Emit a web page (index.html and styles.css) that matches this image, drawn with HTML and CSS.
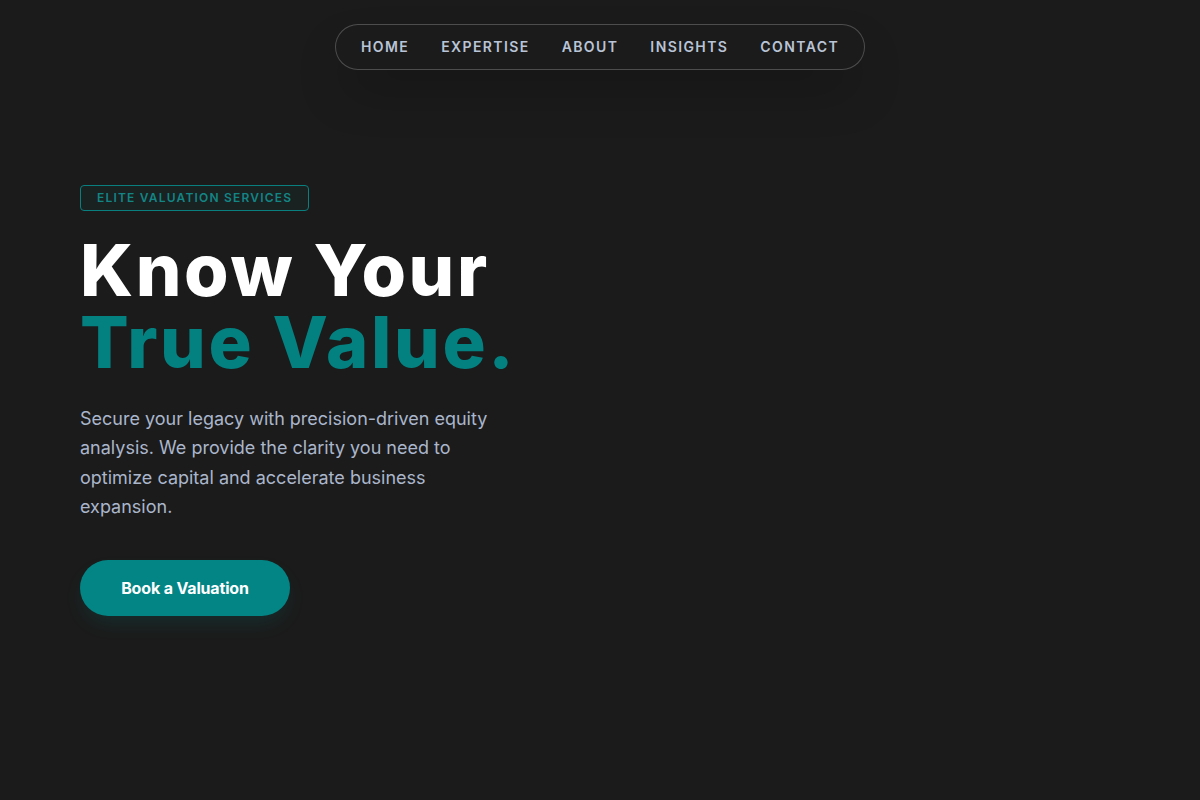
FILE: index.html
```html
<!DOCTYPE html>
<html lang="en">
<head>
<meta charset="utf-8">
<title>Know Your True Value</title>
<link rel="stylesheet" href="styles.css">
</head>
<body>
<header class="top">
  <nav class="nav">
    <a href="#">HOME</a>
    <a href="#">EXPERTISE</a>
    <a href="#">ABOUT</a>
    <a href="#">INSIGHTS</a>
    <a href="#">CONTACT</a>
  </nav>
</header>
<main class="hero">
  <span class="badge">ELITE VALUATION SERVICES</span>
  <h1 class="title"><span class="line-white">Know Your</span><span class="line-teal">True Value.</span></h1>
  <p class="lead">Secure your legacy with precision-driven equity analysis. We provide the clarity you need to optimize capital and accelerate business expansion.</p>
  <a class="cta" href="#">Book a Valuation</a>
</main>
</body>
</html>
```
FILE: styles.css
```css
* { box-sizing: border-box; }
html, body { margin: 0; padding: 0; }
body {
  background: #1b1b1b;
  font-family: Inter, "Noto Sans", sans-serif;
  color: #fff;
  width: 1200px;
  height: 800px;
  overflow: hidden;
}
.top {
  display: flex;
  justify-content: center;
  padding-top: 24px;
}
.nav {
  display: flex;
  gap: 32px;
  height: 46px;
  align-items: center;
  padding: 0 25px 1px;
  border: 1px solid rgba(255,255,255,0.22);
  border-radius: 999px;
  background: #1b1b1b;
  box-shadow: 0 25px 50px -12px rgba(0,0,0,0.35);
}
.nav a {
  color: #b9c4d6;
  text-decoration: none;
  font-size: 14px;
  font-weight: 600;
  letter-spacing: 0.1em;
}
.hero {
  display: flex;
  flex-direction: column;
  align-items: flex-start;
  padding: 115px 80px 0;
}
.badge {
  display: inline-block;
  border: 1px solid #0a7f7f;
  border-radius: 4px;
  background: rgba(0,128,128,0.06);
  color: #138585;
  font-size: 12px;
  font-weight: 600;
  letter-spacing: 0.1em;
  padding: 5px 16px 5px;
  line-height: 14px;
}
.title {
  margin: 23px 0 0;
  font-family: Inter, sans-serif;
  font-weight: 800;
  font-size: 72px;
  line-height: 72px;
  letter-spacing: 2.6px;
  display: flex;
  flex-direction: column;
}
.line-white { color: #ffffff; }
.line-teal { color: #038080; }
.lead {
  margin: 26px 0 0;
  max-width: 440px;
  font-size: 18px;
  line-height: 29.3px;
  color: #aab6cb;
}
.cta {
  margin-top: 39px;
  display: inline-flex;
  align-items: center;
  justify-content: center;
  width: 210px;
  height: 56px;
  border-radius: 999px;
  background: #038585;
  color: #fff;
  font-weight: 700;
  font-size: 16px;
  text-decoration: none;
  letter-spacing: -0.01em;
  box-shadow: 0 10px 20px -5px rgba(0,128,128,0.2);
}
```
